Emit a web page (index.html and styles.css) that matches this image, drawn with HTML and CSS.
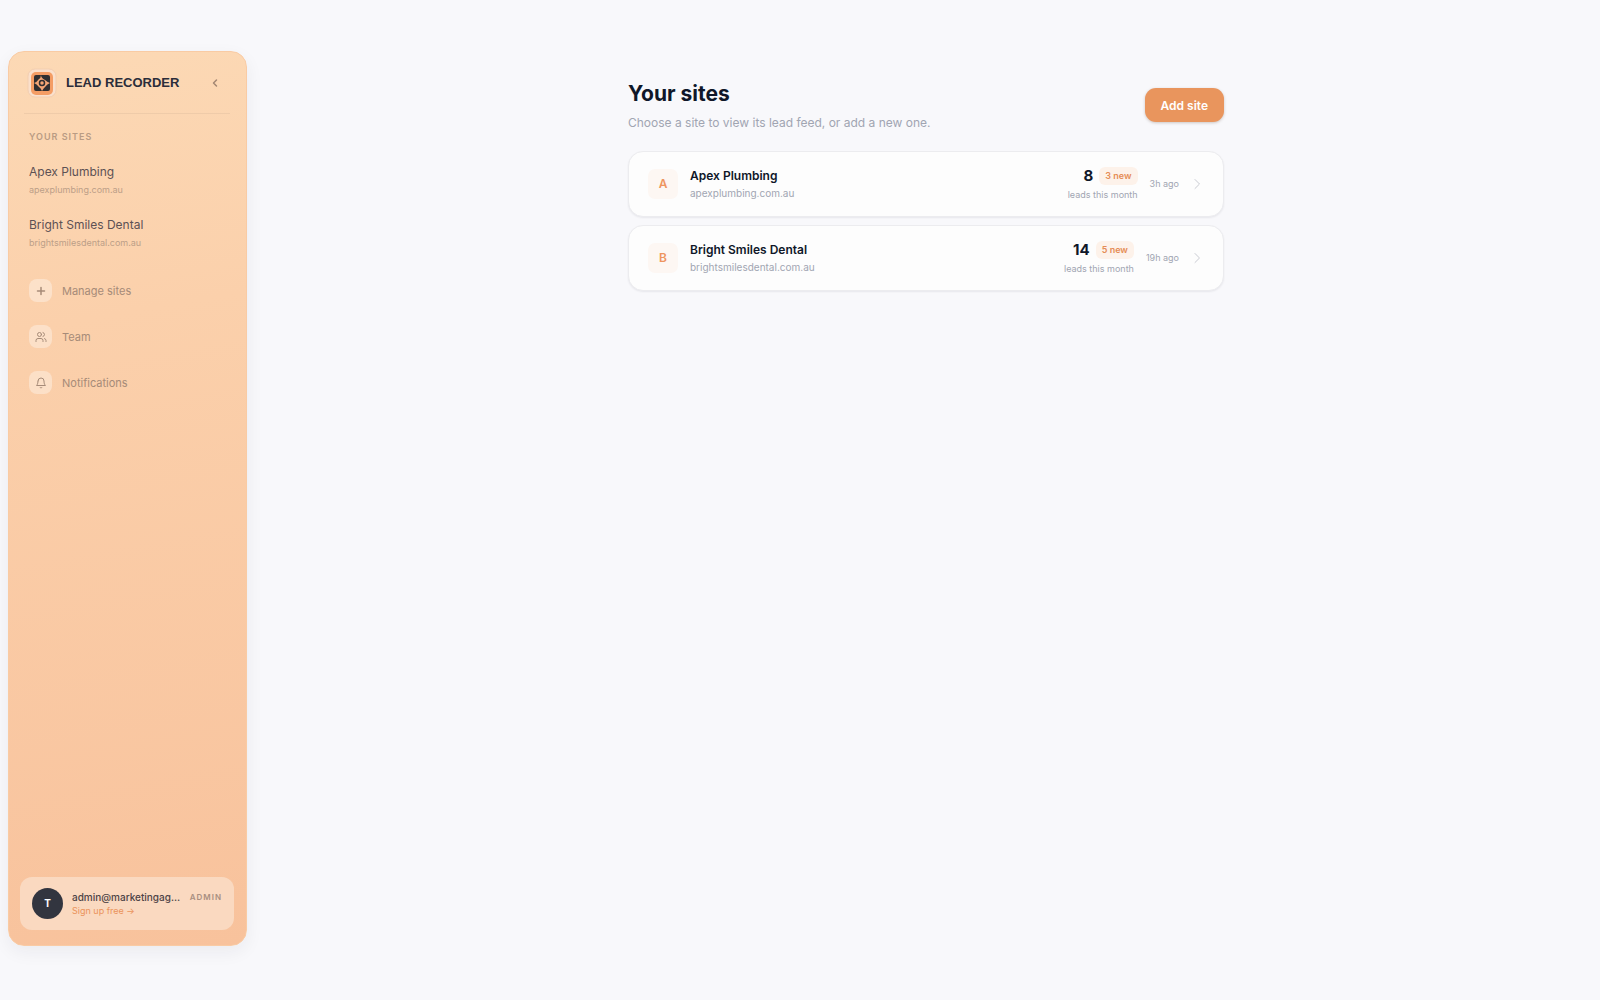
FILE: index.html
```html
<!DOCTYPE html>
<html lang="en">
  <head>
    <meta charset="UTF-8" />
    <meta name="viewport" content="width=device-width, initial-scale=1.0" />
    <title>Lead Recorder</title>
    <link rel="stylesheet" href="styles.css">
  </head>
  <body>
    <aside class="sidebar">
      <div class="brand">
        <svg class="brand-logo" viewBox="0 0 28 28" aria-hidden="true">
          <rect width="28" height="28" rx="7" fill="#fae0cc" stroke="#f3ceb0" />
          <rect x="3" y="3" width="22" height="23" rx="5" fill="#f49d65" />
          <rect x="6" y="6" width="16" height="16" rx="2" fill="#302f31" />
          <path d="M13 6q0 3 4 5 2 2 5 3-3 1-4.500 3.500-2 1.500-3.500 4.500-1-3-3.500-4.500Q9 15 6 14q3-1 4.500-3.500Q13 9 13 6z" fill="#f4a676" />
          <circle cx="14" cy="14" r="2.500" fill="#f4a676" stroke="#302f31" stroke-width="1.500" />
        </svg>
        <span class="brand-name">LEAD RECORDER</span>
        <button class="collapse" aria-label="Collapse sidebar">
          <svg viewBox="0 0 24 24" class="icon"><path d="m15 18-6-6 6-6" /></svg>
        </button>
      </div>

      <h2 class="nav-title">YOUR SITES</h2>
      <nav class="site-nav" aria-label="Sites">
        <a href="#apex">
          <span class="nav-name">Apex Plumbing</span>
          <span class="nav-domain">apexplumbing.com.au</span>
        </a>
        <a href="#bright">
          <span class="nav-name">Bright Smiles Dental</span>
          <span class="nav-domain">brightsmilesdental.com.au</span>
        </a>
      </nav>

      <nav class="tools" aria-label="Settings">
        <a href="#manage">
          <span class="tool-icon"><svg viewBox="0 0 24 24" class="icon bold"><path d="M5 12h14M12 5v14" /></svg></span>
          Manage sites
        </a>
        <a href="#team">
          <span class="tool-icon"><svg viewBox="0 0 24 24" class="icon"><path d="M16 21v-2a4 4 0 0 0-4-4H6a4 4 0 0 0-4 4v2" /><circle cx="9" cy="7" r="4" /><path d="M22 21v-2a4 4 0 0 0-3-3.870M16 3.130a4 4 0 0 1 0 7.750" /></svg></span>
          Team
        </a>
        <a href="#notifications">
          <span class="tool-icon"><svg viewBox="0 0 24 24" class="icon"><path d="M6 8a6 6 0 0 1 12 0c0 7 3 9 3 9H3s3-2 3-9M10.300 21a1.940 1.940 0 0 0 3.400 0" /></svg></span>
          Notifications
        </a>
      </nav>

      <div class="account">
        <span class="avatar">T</span>
        <div class="account-text">
          <div class="account-row">
            <span class="email">admin@marketingag…</span>
            <span class="role">ADMIN</span>
          </div>
          <a class="signup" href="#signup">Sign up free →</a>
        </div>
      </div>
    </aside>

    <main class="main">
      <div class="content">
        <header class="page-header">
          <div>
            <h1>Your sites</h1>
            <p>Choose a site to view its lead feed, or add a new one.</p>
          </div>
          <button class="add-site">Add site</button>
        </header>

        <div class="site-list">
          <a class="site-card" href="#apex">
            <span class="site-initial">A</span>
            <div class="site-info">
              <h3>Apex Plumbing</h3>
              <p>apexplumbing.com.au</p>
            </div>
            <div class="leads">
              <div class="leads-row"><strong>8</strong><span class="badge">3 new</span></div>
              <p>leads this month</p>
            </div>
            <span class="ago">3h ago</span>
            <svg viewBox="0 0 24 24" class="icon chevron"><path d="m8 21 9-9-9-9" /></svg>
          </a>
          <a class="site-card" href="#bright">
            <span class="site-initial">B</span>
            <div class="site-info">
              <h3>Bright Smiles Dental</h3>
              <p>brightsmilesdental.com.au</p>
            </div>
            <div class="leads">
              <div class="leads-row"><strong>14</strong><span class="badge">5 new</span></div>
              <p>leads this month</p>
            </div>
            <span class="ago">19h ago</span>
            <svg viewBox="0 0 24 24" class="icon chevron"><path d="m8 21 9-9-9-9" /></svg>
          </a>
        </div>
      </div>
    </main>
  </body>
</html>
```
FILE: styles.css
```css
* {
  box-sizing: border-box;
}

body {
  margin: 0;
  min-height: 100vh;
  display: flex;
  background: #f8f8fb;
  color: #0f1729;
  font-family: Inter, sans-serif;
  font-size: 12px;
  line-height: 16px;
}

h1,
h2,
h3,
p {
  margin: 0;
}

a {
  color: inherit;
  text-decoration: none;
}

button {
  border: 0;
  font-family: inherit;
  cursor: pointer;
}

.icon {
  display: block;
  width: 12px;
  height: 12px;
  fill: none;
  stroke: currentColor;
  stroke-width: 2;
  stroke-linecap: round;
  stroke-linejoin: round;
}

/* Sidebar */
.sidebar {
  flex: 0 0 239px;
  min-width: 0;
  margin: 51px 5px 54px 8px;
  padding: 0 12px 15px 11px;
  display: flex;
  flex-direction: column;
  border: 1px solid #f9cba4;
  border-radius: 16px;
  background: linear-gradient(170deg, #fcd9b5, #fbd0ab 30%, #f8c29c);
  box-shadow: 0 6px 18px rgba(30, 30, 50, 0.06);
}

.brand {
  display: flex;
  align-items: center;
  height: 62px;
  margin: 0 4px;
  padding: 0 5px 0 4px;
  border-bottom: 1px solid #efcba9;
}

.brand-logo {
  width: 28px;
  height: 28px;
  overflow: visible;
}

.brand-name {
  flex: 1;
  margin-left: 10px;
  color: #2b2d3a;
  font-family: "Liberation Sans", Arial, sans-serif;
  font-size: 13px;
  font-weight: 700;
}

.collapse {
  padding: 4px;
  background: none;
  color: #a38773;
}

.collapse .icon {
  stroke-width: 3;
}

.nav-title {
  margin: 15px 9px 0;
  color: #b99b83;
  font-size: 9px;
  font-weight: 600;
  letter-spacing: 1px;
}

.site-nav {
  display: flex;
  flex-direction: column;
  gap: 17px;
  margin: 17px 9px 0;
}

.nav-name,
.nav-domain {
  display: block;
}

.nav-name {
  color: #5d5154;
  font-size: 12px;
  line-height: 20px;
}

.nav-domain {
  color: #bc9f88;
  font-size: 9px;
}

.tools {
  display: flex;
  flex-direction: column;
  gap: 23px;
  margin: 28px 9px 24px;
  color: #a68b78;
  font-size: 11px;
}

.tools a {
  display: flex;
  align-items: center;
  gap: 10px;
}

.tool-icon {
  display: flex;
  align-items: center;
  justify-content: center;
  width: 23px;
  height: 23px;
  border-radius: 8px;
  background: rgba(255, 255, 255, 0.35);
}

.tool-icon .bold {
  stroke-width: 3;
}

.account {
  display: flex;
  align-items: center;
  gap: 9px;
  height: 53px;
  margin-top: auto;
  padding: 0 12px;
  border-radius: 12px;
  background: #fad9c0;
}

.avatar {
  flex: none;
  width: 31px;
  border-radius: 50%;
  background: #32353f;
  color: #ffffff;
  font-size: 10px;
  font-weight: 700;
  line-height: 31px;
  text-align: center;
}

.account-text {
  flex: 1;
  min-width: 0;
  line-height: 14px;
}

.account-row {
  display: flex;
  justify-content: space-between;
}

.email {
  color: #4d4346;
  font-size: 10px;
  font-weight: 500;
  white-space: nowrap;
}

.role {
  color: #a88f80;
  font-size: 8px;
  font-weight: 600;
  letter-spacing: 1px;
}

.signup {
  display: block;
  color: #ea935b;
  font-size: 9px;
}

/* Main column */
.main {
  flex: 1;
  padding: 79px 24px 24px;
}

.content {
  max-width: 596px;
  margin: 0 auto;
}

.page-header {
  display: flex;
  align-items: center;
  justify-content: space-between;
  margin-bottom: 20px;
}

.page-header h1 {
  font-size: 21px;
  font-weight: 700;
  line-height: 30px;
}

.page-header p {
  margin-top: 6px;
  color: #a1a5b2;
}

.add-site {
  height: 34px;
  padding: 0 16px;
  border-radius: 11px;
  background: #e9955d;
  color: #ffffff;
  font-size: 12px;
  font-weight: 600;
  box-shadow: 0 1px 3px rgba(80, 50, 30, 0.25);
}

.site-list {
  display: flex;
  flex-direction: column;
  gap: 8px;
}

.site-card {
  display: flex;
  align-items: center;
  gap: 12px;
  height: 66px;
  padding: 0 20px 0 19px;
  border: 1px solid #ececef;
  border-radius: 15px;
  background: #fdfdfd;
  box-shadow: 0 1px 2px rgba(20, 20, 40, 0.07);
}

.site-initial {
  width: 30px;
  border-radius: 7px;
  background: #fdf7f3;
  color: #ee9560;
  font-weight: 600;
  line-height: 30px;
  text-align: center;
}

.site-info {
  flex: 1;
}

.site-info h3 {
  font-size: 12px;
  font-weight: 600;
  line-height: 18px;
}

.site-info p {
  color: #a1a5b2;
  font-size: 10px;
}

.leads {
  text-align: right;
}

.leads-row {
  display: flex;
  align-items: center;
  justify-content: flex-end;
  gap: 6px;
}

.leads strong {
  font-size: 15px;
  font-weight: 700;
}

.leads p {
  margin-top: 4px;
  line-height: 12px;
}

.leads p,
.ago {
  color: #a1a5b2;
  font-size: 9px;
}

.badge {
  padding: 0 6px;
  border-radius: 6px;
  background: #fdf2ea;
  color: #e58c55;
  font-size: 9px;
  font-weight: 600;
  line-height: 18px;
}

.chevron {
  color: #c9cbd2;
}
```
